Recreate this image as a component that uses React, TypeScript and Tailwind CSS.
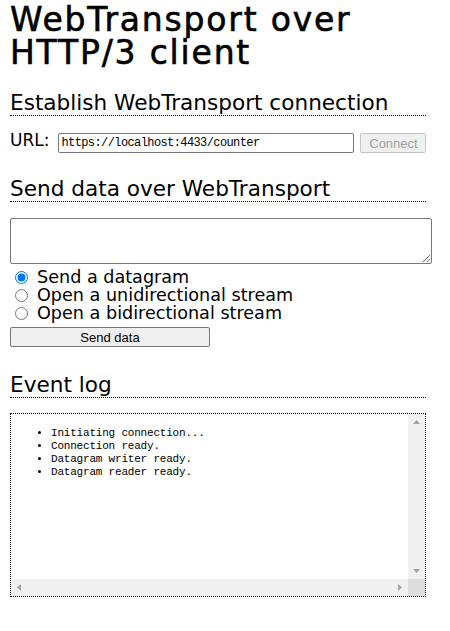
import { useState } from 'react';

const logLines = [
  'Initiating connection...',
  'Connection ready.',
  'Datagram writer ready.',
  'Datagram reader ready.',
];

const sendModes = [
  ['datagram', 'Send a datagram'],
  ['unidi', 'Open a unidirectional stream'],
  ['bidi', 'Open a bidirectional stream'],
];

const SectionTitle = ({ children }: { children: React.ReactNode }) => (
  <h2 className="w-[416px] border-b border-dotted border-black text-[21.6px] leading-[24px] font-normal text-black">
    {children}
  </h2>
);

const Arrow = ({ dir }: { dir: 'up' | 'down' | 'left' | 'right' }) => {
  const points = {
    up: '0,4 7,4 3.5,0',
    down: '0,0 7,0 3.5,4',
    left: '4,0 4,7 0,3.5',
    right: '0,0 0,7 4,3.5',
  }[dir];
  const vertical = dir === 'up' || dir === 'down';
  return (
    <svg width={vertical ? 7 : 4} height={vertical ? 4 : 7} viewBox={vertical ? '0 0 7 4' : '0 0 4 7'}>
      <polygon points={points} fill="#a3a3a3" />
    </svg>
  );
};

export default function App() {
  const [mode, setMode] = useState('datagram');

  return (
    <div className="px-[10px] font-['DejaVu_Sans',sans-serif] text-black bg-white min-h-[631px]">
      <h1 className="text-[33px] leading-[33px] tracking-[1.8px] font-normal pt-[3px] [-webkit-text-stroke:0.6px_black]">
        WebTransport over
        <br />
        HTTP/3 client
      </h1>

      <div className="mt-[22px]">
        <SectionTitle>Establish WebTransport connection</SectionTitle>
        <div className="flex items-center mt-[17px] h-[20px]">
          <span className="text-[17px] mr-[9px] -mt-[4px]">URL:</span>
          <input
            type="text"
            defaultValue="https://localhost:4433/counter"
            className="w-[296px] h-[20px] border border-[#767676] rounded-[2px] px-[2px] text-[12px] tracking-[-0.6px] font-['Liberation_Mono',monospace] outline-none"
          />
          <button
            disabled
            className="ml-[6px] w-[66px] h-[20px] bg-[#efefef] border border-[#c4c4c4] rounded-[2px] text-[13px] text-[#a0a0a0] font-['Liberation_Sans',sans-serif]"
          >
            Connect
          </button>
        </div>
      </div>

      <div className="mt-[24px]">
        <SectionTitle>Send data over WebTransport</SectionTitle>
        <textarea className="block mt-[16px] w-[422px] h-[46px] border border-[#767676] rounded-[2px] p-[2px] resize-y" />
        <div className="text-[17.6px] mt-[4px]">
          {sendModes.map(([value, label]) => (
            <label key={value} className="flex items-center h-[18px] leading-[18px]">
              <input
                type="radio"
                name="sendtype"
                checked={mode === value}
                onChange={() => setMode(value)}
                className="w-[13px] h-[13px] ml-[5px] mr-[9px] accent-[#0075ff]"
              />
              {label}
            </label>
          ))}
        </div>
        <button className="mt-[5px] w-[200px] h-[20px] bg-[#efefef] border border-[#767676] rounded-[2px] text-[13px] font-['Liberation_Sans',sans-serif]">
          Send data
        </button>
      </div>

      <div className="mt-[24px]">
        <SectionTitle>Event log</SectionTitle>
        <div className="mt-[15px] w-[416px] h-[184px] border border-dotted border-black flex flex-col">
          <div className="flex flex-1 min-h-0">
            <ul className="flex-1 list-disc pl-[40px] pt-[13px] font-['Liberation_Mono',monospace] text-[11px] leading-[13px] tracking-[-0.2px]">
              {logLines.map((line) => (
                <li key={line}>{line}</li>
              ))}
            </ul>
            <div className="w-[17px] bg-[#f0f0f0] flex flex-col items-center justify-between py-[6px]">
              <Arrow dir="up" />
              <Arrow dir="down" />
            </div>
          </div>
          <div className="flex h-[17px]">
            <div className="flex-1 bg-[#f0f0f0] flex items-center justify-between px-[6px]">
              <Arrow dir="left" />
              <Arrow dir="right" />
            </div>
            <div className="w-[17px] bg-[#dcdcdc]" />
          </div>
        </div>
      </div>
    </div>
  );
}
